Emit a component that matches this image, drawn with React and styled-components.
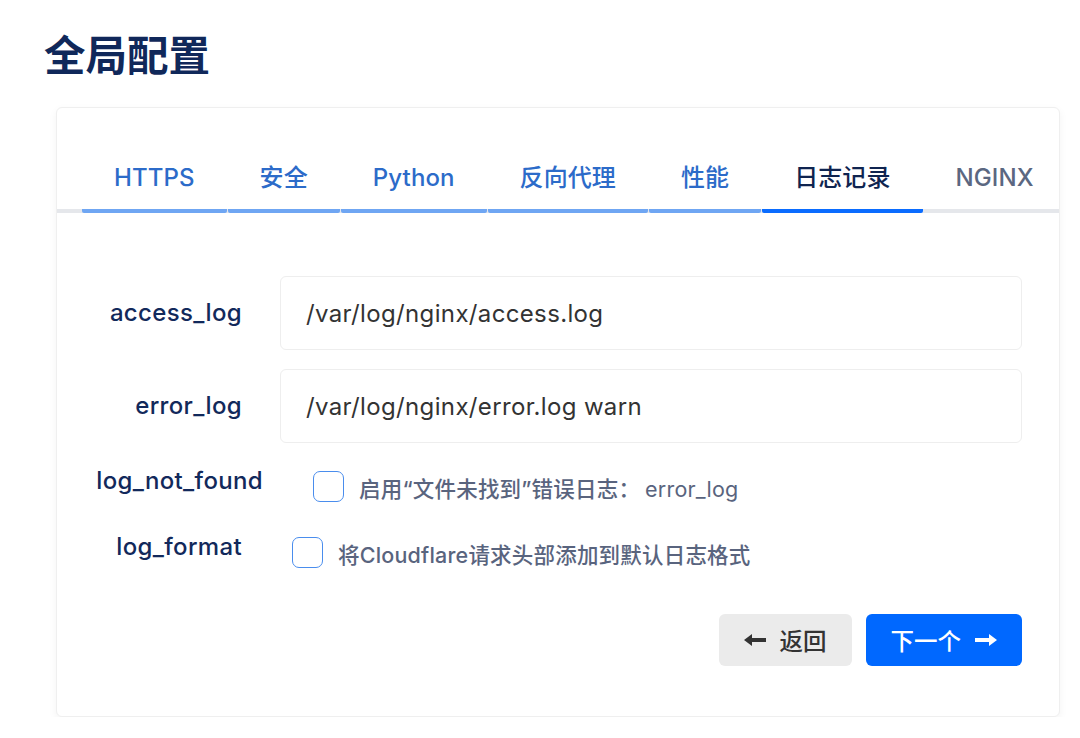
import React from "react";
import styled, { createGlobalStyle } from "styled-components";

const GlobalStyle = createGlobalStyle`
  body {
    margin: 0;
    background: #ffffff;
    font-family: Inter, "Noto Sans CJK SC", sans-serif;
  }
`;

const tabs = [
  { label: "HTTPS", state: "done" },
  { label: "安全", state: "done" },
  { label: "Python", state: "done" },
  { label: "反向代理", state: "done" },
  { label: "性能", state: "done" },
  { label: "日志记录", state: "active" },
  { label: "NGINX", state: "todo" },
];

const tabText = { done: "#2c6bc9", active: "#0f2450", todo: "#5b6781" };
const tabBar = { done: "#6fa6f3", active: "#0a6cff", todo: "transparent" };

function ArrowLeft() {
  return (
    <svg width="22" height="12" viewBox="0 0 22 12">
      <path d="M0 6 L8 0 L8 4 L22 4 L22 8 L8 8 L8 12 Z" fill="currentColor" />
    </svg>
  );
}

function ArrowRight() {
  return (
    <svg width="22" height="12" viewBox="0 0 22 12">
      <path d="M22 6 L14 0 L14 4 L0 4 L0 8 L14 8 L14 12 Z" fill="currentColor" />
    </svg>
  );
}

export default function App() {
  return (
    <Page>
      <GlobalStyle />
      <Title>全局配置</Title>
      <Card>
        <TabRow>
          {tabs.map((t) => (
            <Tab key={t.label} $state={t.state}>
              {t.label}
            </Tab>
          ))}
        </TabRow>
        <Form>
          <FieldRow>
            <Label $width={160}>access_log</Label>
            <Input defaultValue="/var/log/nginx/access.log" />
          </FieldRow>
          <FieldRow>
            <Label $width={160}>error_log</Label>
            <Input defaultValue="/var/log/nginx/error.log warn" />
          </FieldRow>
          <CheckRow>
            <Label $width={181}>log_not_found</Label>
            <Box type="checkbox" />
            <CheckText>
              启用“文件未找到”错误日志：<Mono>error_log</Mono>
            </CheckText>
          </CheckRow>
          <CheckRow>
            <Label $width={160}>log_format</Label>
            <Box type="checkbox" />
            <CheckText>将Cloudflare请求头部添加到默认日志格式</CheckText>
          </CheckRow>
          <Actions>
            <Button $variant="back">
              <ArrowLeft />
              返回
            </Button>
            <Button $variant="next">
              下一个
              <ArrowRight />
            </Button>
          </Actions>
        </Form>
      </Card>
    </Page>
  );
}

const Page = styled.div`
  padding: 31px 20px 0 44px;
`;

const Title = styled.h1`
  margin: 0;
  font-size: 41.5px;
  line-height: 50px;
  font-weight: 700;
  color: #10285a;
`;

const Card = styled.div`
  margin: 26px 0 0 12px;
  width: 1004px;
  box-sizing: border-box;
  background: #fff;
  border: 1px solid #efefef;
  border-radius: 6px;
  box-shadow: 0 3px 8px rgba(0, 0, 0, 0.05);
  overflow: hidden;
`;

const TabRow = styled.div`
  display: flex;
  padding-left: 25px;
  border-bottom: 4px solid #e5e7eb;
`;

const Tab = styled.div`
  flex-shrink: 0;
  white-space: nowrap;
  padding: 54px 32px 15px;
  margin-right: 1px;
  margin-bottom: -4px;
  font-size: 24px;
  line-height: 32px;
  font-weight: 500;
  letter-spacing: 0.1px;
  color: ${(p) => tabText[p.$state]};
  border-bottom: 4px solid ${(p) => tabBar[p.$state]};
  border-radius: 0 0 2px 2px;
`;

const Form = styled.div`
  display: flex;
  flex-direction: column;
  gap: 19px;
  padding: 63px 37px 50px 25px;
`;

const FieldRow = styled.div`
  display: flex;
  align-items: center;
  gap: 38px;
`;

const Label = styled.div`
  width: ${(p) => p.$width}px;
  flex-shrink: 0;
  text-align: right;
  font-size: 24px;
  line-height: 32px;
  font-weight: 500;
  letter-spacing: 0.35px;
  color: #12295b;
  white-space: nowrap;
`;

const Input = styled.input`
  flex: 1;
  height: 74px;
  box-sizing: border-box;
  padding: 0 25px;
  border: 1px solid #eeeeee;
  border-radius: 6px;
  font-family: Inter, "Noto Sans CJK SC", sans-serif;
  font-size: 24px;
  letter-spacing: 0.35px;
  color: #333;
  outline: none;
`;

const CheckRow = styled.div`
  display: flex;
  align-items: flex-start;
  min-height: 44px;
  margin-top: 3px;
`;

const Box = styled.input`
  appearance: none;
  margin: 6px 15px 0 50px;
  width: 31px;
  height: 31px;
  box-sizing: border-box;
  border: 1.5px solid #4a8ded;
  border-radius: 7px;
  background: #fff;
  flex-shrink: 0;
`;

const CheckText = styled.div`
  margin-top: 8px;
  font-size: 21.5px;
  line-height: 32px;
  font-weight: 500;
  letter-spacing: 0.2px;
  color: #59647e;
`;

const Mono = styled.span`
  margin-left: 5px;
  font-weight: 400;
`;

const Actions = styled.div`
  display: flex;
  justify-content: flex-end;
  gap: 14px;
  margin-top: 20px;
`;

const Button = styled.button`
  display: flex;
  align-items: center;
  gap: 14px;
  height: 52px;
  padding: 0 25px;
  border: none;
  border-radius: 6px;
  font-family: Inter, "Noto Sans CJK SC", sans-serif;
  font-size: 23.5px;
  font-weight: 500;
  background: ${(p) => (p.$variant === "next" ? "#0068ff" : "#ebebeb")};
  color: ${(p) => (p.$variant === "next" ? "#ffffff" : "#333333")};
`;
